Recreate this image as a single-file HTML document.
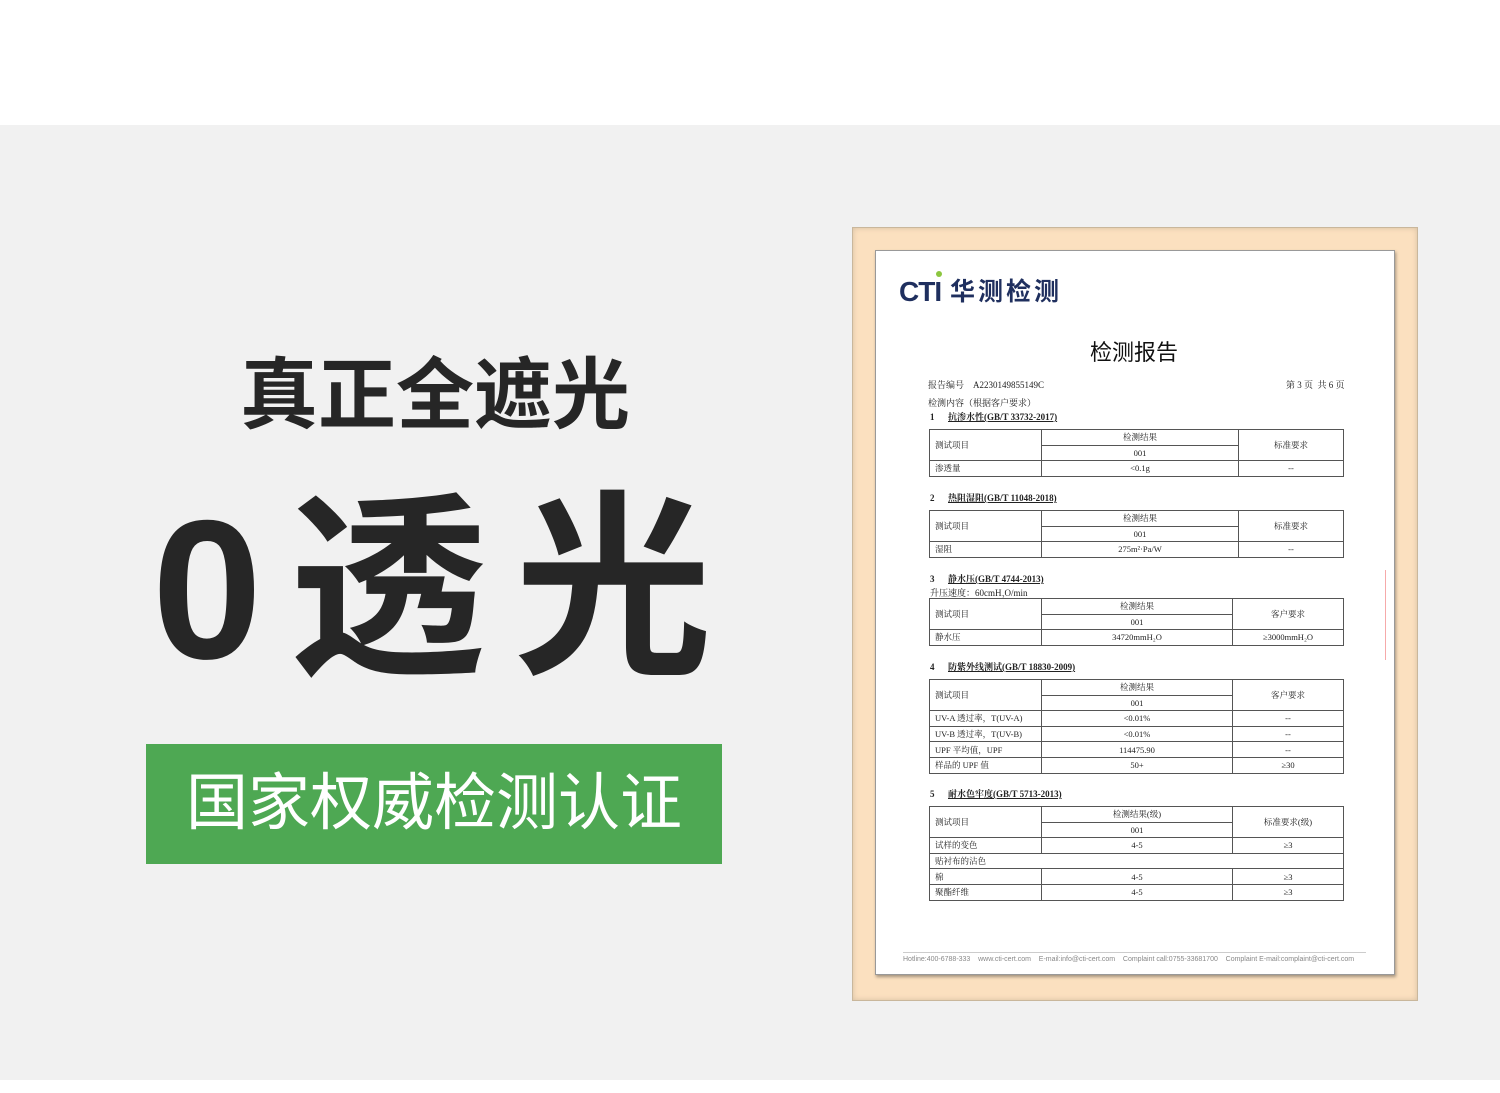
<!DOCTYPE html>
<html><head><meta charset="utf-8">
<style>
*{margin:0;padding:0;box-sizing:border-box}
body{width:1500px;height:1093px;background:#fff;position:relative;overflow:hidden;font-family:"Liberation Sans","Noto Sans CJK SC",sans-serif}
.gray{position:absolute;left:0;top:125px;width:1500px;height:955px;background:#f1f1f1}
.abs{position:absolute}
.t1{left:240px;top:345px;font-size:78px;font-weight:700;color:#262626;letter-spacing:0px;white-space:nowrap;line-height:100px}
.t2{left:152px;top:470px;font-size:198px;font-weight:700;color:#262626;white-space:nowrap;line-height:240px;letter-spacing:27px}
.green{left:146px;top:744px;width:576px;height:120px;background:#4ea853;color:#fff;font-size:62px;line-height:120px;text-align:center;white-space:nowrap}
.frame{left:852px;top:227px;width:566px;height:774px;background:#fbe0bf;border:1px solid #c9b79c;box-shadow:inset 0 0 6px rgba(0,0,0,.15)}
.paper{left:875px;top:250px;width:520px;height:725px;background:#fff;border:1px solid #999;box-shadow:1px 2px 3px rgba(0,0,0,.35)}
.s{font-family:"Liberation Serif","Noto Serif CJK SC",serif;color:#222;font-size:9px;white-space:nowrap}
table{position:absolute;left:929px;width:415px;border-collapse:collapse;font-family:"Liberation Serif","Noto Serif CJK SC",serif;font-size:8.5px;color:#222}
td{border:1px solid #555;height:15.6px;line-height:14px;padding:0 5px;text-align:center;white-space:nowrap}
td.l{text-align:left}
</style></head><body>
<div class="gray"></div>
<div class="abs t1">真正全遮光</div>
<div class="abs t2">0透光</div>
<div class="abs green">国家权威检测认证</div>

<div class="abs frame"></div>
<div class="abs paper"></div>
<div class="abs" style="left:899px;top:276px;font-size:28px;font-weight:900;color:#1f2f5e;font-family:'Liberation Sans',sans-serif;letter-spacing:-1px;line-height:32px">CTI</div>
<div class="abs" style="left:936px;top:271px;width:6px;height:6px;border-radius:50%;background:#8cc63f"></div>
<div class="abs" style="left:950px;top:276px;font-size:25px;font-weight:700;color:#1f2f5e;line-height:32px;letter-spacing:3px">华测检测</div>
<div class="abs" style="left:1090px;top:336px;font-size:22px;color:#111;line-height:30px;font-family:'Noto Sans CJK SC',sans-serif">检测报告</div>

<div class="abs s" style="left:928px;top:378px">报告编号&nbsp;&nbsp;&nbsp; A2230149855149C</div>
<div class="abs s" style="left:1286px;top:378px">第 3 页&nbsp; 共 6 页</div>
<div class="abs s" style="left:928px;top:396px">检测内容（根据客户要求）</div>
<div class="abs s" style="left:930px;top:410px;font-weight:700">1&nbsp;&nbsp;&nbsp;&nbsp;&nbsp; <u>抗渗水性(GB/T 33732-2017)</u></div>
<table style="top:429px">
<tr><td class="l" rowspan="2" style="width:112px">测试项目</td><td style="width:197px">检测结果</td><td rowspan="2">标准要求</td></tr>
<tr><td>001</td></tr>
<tr><td class="l">渗透量</td><td>&lt;0.1g</td><td>--</td></tr>
</table>
<div class="abs s" style="left:930px;top:491px;font-weight:700">2&nbsp;&nbsp;&nbsp;&nbsp;&nbsp; <u>热阻湿阻(GB/T 11048-2018)</u></div>
<table style="top:510px">
<tr><td class="l" rowspan="2" style="width:112px">测试项目</td><td style="width:197px">检测结果</td><td rowspan="2">标准要求</td></tr>
<tr><td>001</td></tr>
<tr><td class="l">湿阻</td><td>275m²·Pa/W</td><td>--</td></tr>
</table>
<div class="abs s" style="left:930px;top:572px;font-weight:700">3&nbsp;&nbsp;&nbsp;&nbsp;&nbsp; <u>静水压(GB/T 4744-2013)</u></div>
<div class="abs s" style="left:930px;top:586px">升压速度：60cmH<sub style="font-size:6px">2</sub>O/min</div>
<table style="top:598px">
<tr><td class="l" rowspan="2" style="width:112px">测试项目</td><td style="width:191px">检测结果</td><td rowspan="2">客户要求</td></tr>
<tr><td>001</td></tr>
<tr><td class="l">静水压</td><td>34720mmH₂O</td><td>≥3000mmH₂O</td></tr>
</table>
<div class="abs s" style="left:930px;top:660px;font-weight:700">4&nbsp;&nbsp;&nbsp;&nbsp;&nbsp; <u>防紫外线测试(GB/T 18830-2009)</u></div>
<table style="top:679px">
<tr><td class="l" rowspan="2" style="width:112px">测试项目</td><td style="width:191px">检测结果</td><td rowspan="2">客户要求</td></tr>
<tr><td>001</td></tr>
<tr><td class="l">UV-A 透过率，T(UV-A)</td><td>&lt;0.01%</td><td>--</td></tr>
<tr><td class="l">UV-B 透过率，T(UV-B)</td><td>&lt;0.01%</td><td>--</td></tr>
<tr><td class="l">UPF 平均值，UPF</td><td>114475.90</td><td>--</td></tr>
<tr><td class="l">样品的 UPF 值</td><td>50+</td><td>≥30</td></tr>
</table>
<div class="abs s" style="left:930px;top:787px;font-weight:700">5&nbsp;&nbsp;&nbsp;&nbsp;&nbsp; <u>耐水色牢度(GB/T 5713-2013)</u></div>
<table style="top:806px">
<tr><td class="l" rowspan="2" style="width:112px">测试项目</td><td style="width:191px">检测结果(级)</td><td rowspan="2">标准要求(级)</td></tr>
<tr><td>001</td></tr>
<tr><td class="l">试样的变色</td><td>4-5</td><td>≥3</td></tr>
<tr><td class="l" colspan="3">贴衬布的沾色</td></tr>
<tr><td class="l">棉</td><td>4-5</td><td>≥3</td></tr>
<tr><td class="l">聚酯纤维</td><td>4-5</td><td>≥3</td></tr>
</table>
<div class="abs" style="left:903px;top:952px;width:463px;border-top:1px solid #ccc"></div>
<div class="abs" style="left:903px;top:956px;font-size:7px;color:#888;white-space:nowrap;word-spacing:0px">Hotline:400-6788-333 &nbsp;&nbsp; www.cti-cert.com &nbsp;&nbsp; E-mail:info@cti-cert.com &nbsp;&nbsp; Complaint call:0755-33681700 &nbsp;&nbsp; Complaint E-mail:complaint@cti-cert.com</div>
<div class="abs" style="left:1385px;top:570px;width:6px;height:90px;border-left:1px solid #e55;opacity:.5"></div>
</body></html>
